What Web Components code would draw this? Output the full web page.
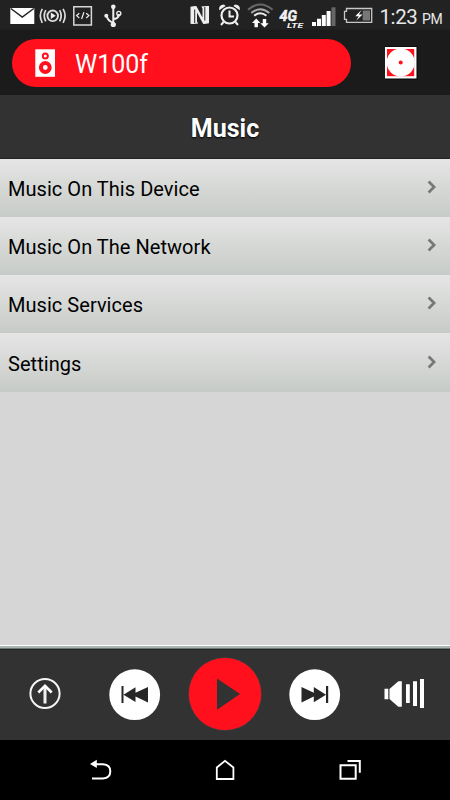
<!DOCTYPE html>
<html lang="en">
<head>
<meta charset="utf-8">
<title>Music</title>
<style>
html,body{margin:0;padding:0;background:#000}
body{width:450px;height:800px;overflow:hidden;font-family:Roboto,"Liberation Sans",sans-serif}
</style>
</head>
<body>
<music-app></music-app>
<script>
// Each icon: viewBox "x y w h" plus its shapes.
const ICONS = {
  mail: ['10 0 25 31', '<path fill="#fff" d="M10.3 8h24v16h-24z"/><path d="M10.8 8.5 22.3 17 33.8 8.5" fill="none" stroke="#222" stroke-width="1.5"/>'],
  cast: ['39 0 28 31', '<g fill="none" stroke="#ddd" stroke-width="1.7"><circle cx="52.7" cy="15.8" r="5.3" stroke-width="1.9"/><path d="M45.8 10.2q-3.2 5.6 0 11.2M42.3 8.8q-4 7 0 14M59.6 10.2q3.2 5.6 0 11.2M63.1 8.8q4 7 0 14"/></g><path fill="#eee" d="M50.8 12.6v6.4l5-3.2z"/>'],
  code: ['73 0 20 31', '<path fill="none" stroke="#d8d8d8" stroke-width="1.5" d="M73.8 6.8h17.6v18.2H73.8z"/><path fill="none" stroke="#eee" stroke-width="1.2" d="M79.3 13.2l-2.7 2.4 2.7 2.4M86.2 13.2l2.7 2.4-2.7 2.4M83.9 12.2l-2.3 6.8"/>'],
  usb: ['103 0 20 31', '<g fill="none" stroke="#eee" stroke-width="2"><path d="M113.3 7v17M113.3 22.5q-5-1-6.5-6M113.3 19q5 0 6-5"/></g><circle cx="113.3" cy="6.8" r="2.3" fill="#eee"/><circle cx="113.3" cy="24.5" r="2.6" fill="#eee"/><circle cx="106.3" cy="15.7" r="2" fill="#eee"/><circle cx="118.8" cy="13.4" r="2" fill="none" stroke="#eee" stroke-width="1.4"/>'],
  nfc: ['190 0 20 31', '<path fill="#eee" d="M190.500 6.800q2.500-.8 5.800-.8l6.200 11.500V8.500l-1.200-2q4-.9 7.700-.5v17.300q-2.500.7-5.800.7l-6.200-11.500v9l1.200 2q-4 .8-7.700.3z"/><path fill="none" stroke="#222" stroke-width="1" d="M194.700 23V9.500M204.800 7v13.500"/>'],
  alarm: ['218 0 24 31', '<circle cx="229.5" cy="15.5" r="8" fill="none" stroke="#eee" stroke-width="2.2"/><path fill="none" stroke="#eee" stroke-width="2" d="M229.5 10.5v6h4.5M223.5 22l-2.500 3M235.5 22l2.500 3"/><path fill="#eee" d="M219.2 10.300q-.8-5.500 4.800-5.800l1.600 1.500zM239.800 10.300q.8-5.500-4.800-5.800l-1.600 1.500z"/>'],
  wifi: ['247 0 27 31', '<g fill="none" stroke-width="2"><path stroke="#686868" d="M248 9.700q12.300-10.500 24.600 0"/><path stroke="#aaa" d="M251.300 13q9-7.600 18 0"/><path stroke="#eee" d="M254.200 15.700q6.100-5 12.200 0"/></g><path fill="#fff" d="M256.200 18.600l4.200 4.400h-2.500v4.200h-3.400V23H252zM264.500 27.600l-4.200-4.400h2.500V19h3.400v4.200h2.500z"/>'],
  lte: ['278 0 27 31', '<g fill="#f2f2f2" font-family="Roboto,sans-serif" font-weight="700" font-style="italic"><text x="279.500" y="21.300" font-size="15" textLength="17.500" lengthAdjust="spacingAndGlyphs" stroke="#f2f2f2" stroke-width=".5">4G</text><text x="287" y="27.600" font-size="7" textLength="16" lengthAdjust="spacingAndGlyphs">LTE</text></g>'],
  signal: ['311 0 26 31', '<path fill="#fff" d="M312 22h4v4h-4zM317 18.700h4V26h-4zM321.800 15h4v11h-4zM326.600 11h4v15h-4z"/><path fill="#666" d="M331.500 7.300h4V26h-4z"/>'],
  battery: ['343 0 31 31', '<path fill="none" stroke="#c8c8c8" stroke-width="1.3" d="M346.500 8.500h25.200v13.900h-25.200v-3h-2v-8h2z"/><path fill="#777" d="M362.700 10.500h7.300v10h-7.300z"/><path fill="#fff" d="M361.500 10l-6.300 6.200h3.500l-2.500 4.500 6.300-6.100h-3.600z"/>'],
  speaker: ['35 49 21 28', '<path fill="#fff" d="M35.300 49.300h19.700v27.500H35.300z"/><g fill="none" stroke="#ff101c"><circle cx="45.300" cy="56" r="2.500" stroke-width="2"/><circle cx="45.300" cy="67.500" r="4.400" stroke-width="4"/></g>'],
  disc: ['384 46 34 34', '<path fill="#000" d="M385 46.500h32.500V79.500H385z"/><path fill="#fff" d="M385 47h31.500v31.500H385z"/><path fill="#ff101c" d="M387 49h27.200v27.200H387z"/><circle cx="400.700" cy="62.500" r="14" fill="#fff"/><circle cx="400.700" cy="62.500" r="2" fill="#ff101c"/>'],
  chevron: ['426 180 12 14', '<path fill="none" stroke="#777" stroke-width="2.700" d="M428.600 181.500l5.500 5.500-5.500 5.500"/>'],
  up: ['28 677 34 34', '<circle cx="45" cy="693.500" r="14.600" fill="none" stroke="#f5f5f5" stroke-width="2"/><path fill="none" stroke="#f0f0f0" stroke-width="3" d="M45 703.500V686.500"/><path fill="none" stroke="#fff" stroke-width="2.600" d="M38.300 692.500l6.700-6.700 6.700 6.700"/>'],
  prev: ['108 667 54 54', '<circle cx="134.700" cy="694.700" r="25.400" fill="#fff"/><path fill="#262626" d="M121.500 686h2v17h-2zM123.500 694.700l12-7.500v5.500l12.500-5.700v15.500l-12.500-6v5.500z"/>'],
  play: ['187 656 76 76', '<circle cx="225" cy="694" r="36.600" fill="#ff101c" stroke="#224044" stroke-width=".7"/><path fill="#323232" d="M217 678.500l23 15.500-23 15.800z"/>'],
  next: ['288 667 54 54', '<circle cx="314.700" cy="694.700" r="25.400" fill="#fff"/><path fill="#262626" d="M326 686h2.200v17H326zM326 694.700l-12.200-7.700v5.700l-12.300-5.700v15.500l12.300-6v5.700z"/>'],
  volume: ['383 677 42 34', '<path fill="#fff" d="M384.500 688.700h3.800v10.500h-3.800zM389.500 689l8.800-7.700h3.500v25.500h-3.500l-8.800-7.700zM406 684.300h3.800V703H406zM413 681.300h4V706h-4zM420 679h4v29h-4z"/>'],
  back: ['89 758 24 24', '<path fill="none" stroke="#fff" stroke-width="2" d="M95 764.200h8q7.300.5 7.300 7t-7.300 7.300H92"/><path fill="#fff" d="M90 764l6.800-4.200v8.200z"/>'],
  home: ['214 758 22 24', '<path fill="none" stroke="#fff" stroke-width="1.800" d="M216.800 779v-11.500l8.200-6.700 8.400 6.700V779z"/>'],
  recent: ['338 758 24 24', '<path fill="none" stroke="#fff" stroke-width="2" d="M340.500 765.300h15.200v13.500h-15.200zM347.500 761h12.300v11.700"/>']
};

class UiIcon extends HTMLElement {
  connectedCallback() {
    const [box, shapes] = ICONS[this.getAttribute('name')];
    const [, , w, h] = box.split(' ');
    this.attachShadow({mode: 'open'}).innerHTML =
      `<style>:host{display:block;flex:none}svg{display:block}</style><svg width="${w}" height="${h}" viewBox="${box}">${shapes}</svg>`;
  }
}
customElements.define('ui-icon', UiIcon);

function define(tag, html) {
  const template = document.createElement('template');
  template.innerHTML = html;
  customElements.define(tag, class extends HTMLElement {
    constructor() {
      super();
      this.attachShadow({mode: 'open'}).append(template.content.cloneNode(true));
    }
  });
}

define('status-bar', `<style>
:host{display:flex;height:31px;background:linear-gradient(#222 0 29px,#181818);color:#e8e8e8;padding-left:10px;box-sizing:border-box}
.time{margin:4px 0 0 5.500px;font-size:20.500px;line-height:26px;white-space:nowrap;letter-spacing:-.4px}
small{font-size:14px;margin-left:4.500px;letter-spacing:-.2px}
</style>
<ui-icon name="mail"></ui-icon>
<ui-icon name="cast" style="margin-left:4px"></ui-icon>
<ui-icon name="code" style="margin-left:6px"></ui-icon>
<ui-icon name="usb" style="margin-left:10px"></ui-icon>
<ui-icon name="nfc" style="margin-left:67px"></ui-icon>
<ui-icon name="alarm" style="margin-left:8px"></ui-icon>
<ui-icon name="wifi" style="margin-left:5px"></ui-icon>
<ui-icon name="lte" style="margin-left:4px"></ui-icon>
<ui-icon name="signal" style="margin-left:6px"></ui-icon>
<ui-icon name="battery" style="margin-left:6px"></ui-icon>
<div class="time">1:23<small>PM</small></div>`);

define('device-bar', `<style>
:host{display:flex;align-items:center;justify-content:space-between;height:64px;box-sizing:border-box;padding:0 32px 0 12px;background:#1b1b1b}
.pill{display:flex;align-items:center;width:339px;height:48px;box-sizing:border-box;padding-left:23px;border-radius:24px;background:#ff101c;color:#fff;font-size:25px;gap:19px}
span{padding-top:2px}
</style>
<div class="pill"><ui-icon name="speaker"></ui-icon><span><slot></slot></span></div>
<ui-icon name="disc"></ui-icon>`);

define('page-title', `<style>
:host{display:flex;align-items:center;justify-content:center;height:63.500px;box-sizing:border-box;padding-top:5px;background:#323232;border-bottom:1px solid #242424;color:#fff;font-size:25px;font-weight:700;text-shadow:0 1px 2px #000}
</style><slot></slot>`);

define('menu-row', `<style>
:host{display:flex;align-items:center;justify-content:space-between;height:58.330px;box-sizing:border-box;padding:2px 12px 0 8px;background:linear-gradient(#e5e5e5,#c7cbc7);color:#000;font-size:20px;letter-spacing:.04px}
ui-icon{margin-top:-4px}
</style><span><slot></slot></span><ui-icon name="chevron"></ui-icon>`);

define('player-bar', `<style>
:host{display:flex;align-items:center;justify-content:space-between;height:95px;box-sizing:border-box;padding:2px 25px 0 28px;background:linear-gradient(#fff 0 1.500px,#aab4b0 1.500px 3px,#6e7775 3px 4px,#252525 4px 5px,#323232 5px)}
</style>
<ui-icon name="up"></ui-icon><ui-icon name="prev" style="margin-left:21px"></ui-icon><ui-icon name="play"></ui-icon><ui-icon name="next"></ui-icon><ui-icon name="volume" style="margin-left:16px"></ui-icon>`);

define('nav-bar', `<style>
:host{display:flex;align-items:center;justify-content:space-between;height:60px;box-sizing:border-box;padding:0 88px 0 89px;background:#000}
</style><ui-icon name="back"></ui-icon><ui-icon name="home" style="margin-right:2px"></ui-icon><ui-icon name="recent"></ui-icon>`);

define('music-app', `<style>
:host{display:flex;flex-direction:column;width:450px;height:800px;background:#d6d6d6}
main{flex:1}
</style>
<status-bar></status-bar>
<device-bar>W100f</device-bar>
<page-title>Music</page-title>
<main>
<menu-row>Music On This Device</menu-row>
<menu-row>Music On The Network</menu-row>
<menu-row>Music Services</menu-row>
<menu-row>Settings</menu-row>
</main>
<player-bar></player-bar>
<nav-bar></nav-bar>`);
</script>
</body>
</html>
